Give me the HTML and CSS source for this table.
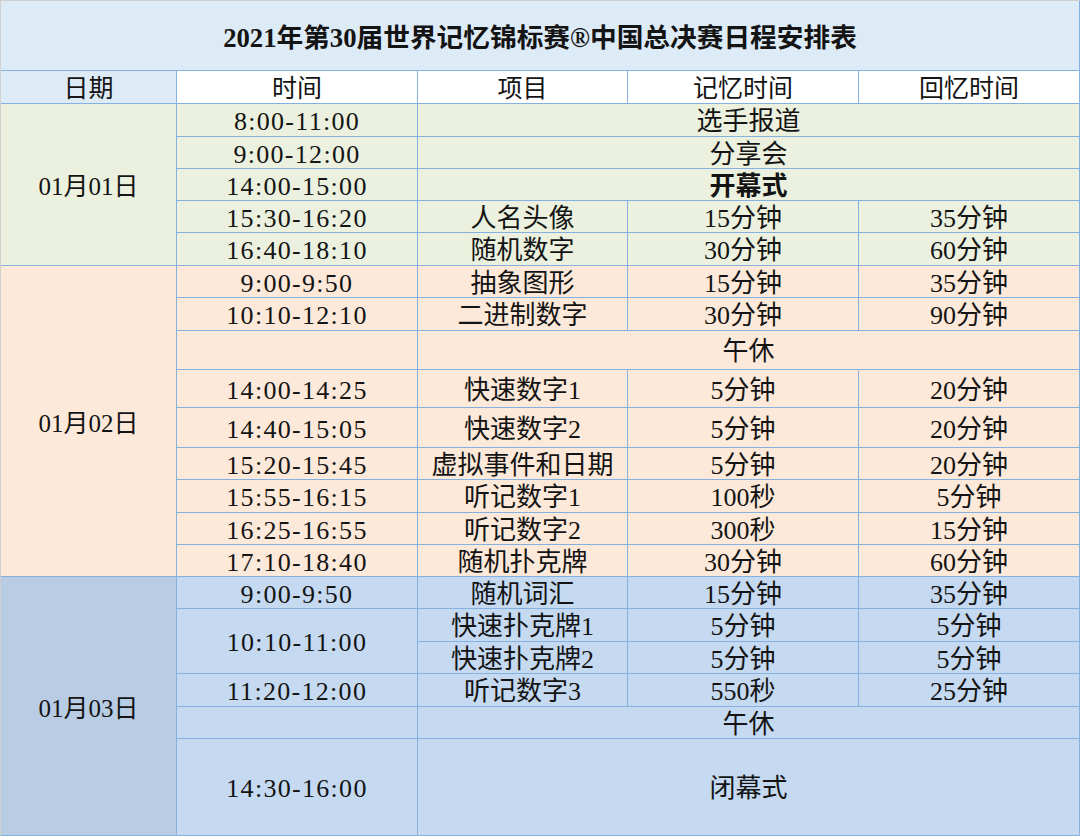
FILE: index.html
```html
<!DOCTYPE html>
<html lang="zh-CN">
<head>
<meta charset="utf-8">
<title>2021年第30届世界记忆锦标赛®中国总决赛日程安排表</title>
<link rel="stylesheet" href="styles.css">
</head>
<body>
<div class="sheet">
  <div class="grid">
    <div class="cell title span5">2021年第30届世界记忆锦标赛®中国总决赛日程安排表</div>

    <div class="cell head head-date">日期</div>
    <div class="cell head">时间</div>
    <div class="cell head">项目</div>
    <div class="cell head">记忆时间</div>
    <div class="cell head">回忆时间</div>

    <div class="cell g date rs5">01月01日</div>
    <div class="cell g time">8:00-11:00</div>
    <div class="cell g span3">选手报道</div>
    <div class="cell g time">9:00-12:00</div>
    <div class="cell g span3">分享会</div>
    <div class="cell g time">14:00-15:00</div>
    <div class="cell g span3 bold">开幕式</div>
    <div class="cell g time">15:30-16:20</div>
    <div class="cell g">人名头像</div>
    <div class="cell g">15分钟</div>
    <div class="cell g">35分钟</div>
    <div class="cell g time">16:40-18:10</div>
    <div class="cell g">随机数字</div>
    <div class="cell g">30分钟</div>
    <div class="cell g">60分钟</div>

    <div class="cell o date rs9">01月02日</div>
    <div class="cell o time">9:00-9:50</div>
    <div class="cell o">抽象图形</div>
    <div class="cell o">15分钟</div>
    <div class="cell o">35分钟</div>
    <div class="cell o time">10:10-12:10</div>
    <div class="cell o">二进制数字</div>
    <div class="cell o">30分钟</div>
    <div class="cell o">90分钟</div>
    <div class="cell o time"></div>
    <div class="cell o span3">午休</div>
    <div class="cell o time">14:00-14:25</div>
    <div class="cell o">快速数字1</div>
    <div class="cell o">5分钟</div>
    <div class="cell o">20分钟</div>
    <div class="cell o time">14:40-15:05</div>
    <div class="cell o">快速数字2</div>
    <div class="cell o">5分钟</div>
    <div class="cell o">20分钟</div>
    <div class="cell o time">15:20-15:45</div>
    <div class="cell o">虚拟事件和日期</div>
    <div class="cell o">5分钟</div>
    <div class="cell o">20分钟</div>
    <div class="cell o time">15:55-16:15</div>
    <div class="cell o">听记数字1</div>
    <div class="cell o">100秒</div>
    <div class="cell o">5分钟</div>
    <div class="cell o time">16:25-16:55</div>
    <div class="cell o">听记数字2</div>
    <div class="cell o">300秒</div>
    <div class="cell o">15分钟</div>
    <div class="cell o time">17:10-18:40</div>
    <div class="cell o">随机扑克牌</div>
    <div class="cell o">30分钟</div>
    <div class="cell o">60分钟</div>

    <div class="cell b date b-date rs6">01月03日</div>
    <div class="cell b time">9:00-9:50</div>
    <div class="cell b">随机词汇</div>
    <div class="cell b">15分钟</div>
    <div class="cell b">35分钟</div>
    <div class="cell b time rs2">10:10-11:00</div>
    <div class="cell b">快速扑克牌1</div>
    <div class="cell b">5分钟</div>
    <div class="cell b">5分钟</div>
    <div class="cell b">快速扑克牌2</div>
    <div class="cell b">5分钟</div>
    <div class="cell b">5分钟</div>
    <div class="cell b time">11:20-12:00</div>
    <div class="cell b">听记数字3</div>
    <div class="cell b">550秒</div>
    <div class="cell b">25分钟</div>
    <div class="cell b time"></div>
    <div class="cell b span3">午休</div>
    <div class="cell b time">14:30-16:00</div>
    <div class="cell b span3">闭幕式</div>
  </div>
</div>
</body>
</html>
```

FILE: styles.css
```css
html, body {
  margin: 0;
  padding: 0;
  background: #ffffff;
}

.sheet {
  width: 1079px;
  height: 835px;
  border-left: 1px solid #cfcfcf;
  border-top: 1px solid #cfcfcf;
  overflow: hidden;
}

.grid {
  display: grid;
  grid-template-columns: 175px 240px 209px 230px 220px;
  grid-template-rows: 69px 32px 32px 31px 31px 31px 32px 31px 32px 38px 37px 39px 31px 32px 31px 31px 31px 32px 31px 32px 31px 96px;
  gap: 1px;
  padding: 0 1px 1px 0;
  background: #84b1e0;
  font-family: "Liberation Serif", "Noto Sans CJK SC", serif;
  font-size: 26px;
  color: #141414;
}

.cell {
  display: flex;
  align-items: center;
  justify-content: center;
  line-height: 1;
  white-space: nowrap;
  padding-top: 4px;
  box-sizing: border-box;
}

.title {
  background: #ddebf7;
  font-weight: 700;
  font-size: 26.7px;
  padding-top: 6px;
}

.head {
  background: #ffffff;
  font-size: 25px;
  padding-top: 3px;
}

.head-date {
  background: #ddebf7;
}

.span5 { grid-column: span 5; }
.span3 { grid-column: span 3; }
.rs2 { grid-row: span 2; }
.rs5 { grid-row: span 5; }
.rs6 { grid-row: span 6; }
.rs9 { grid-row: span 9; }

.g { background: #ebf1de; }
.o { background: #fde9d9; }
.b { background: #c5d9f1; }
.b-date { background: #b8cce4; }

.time {
  letter-spacing: 1.3px;
}

.date {
  font-size: 25px;
}

.bold {
  font-weight: 700;
}
```
